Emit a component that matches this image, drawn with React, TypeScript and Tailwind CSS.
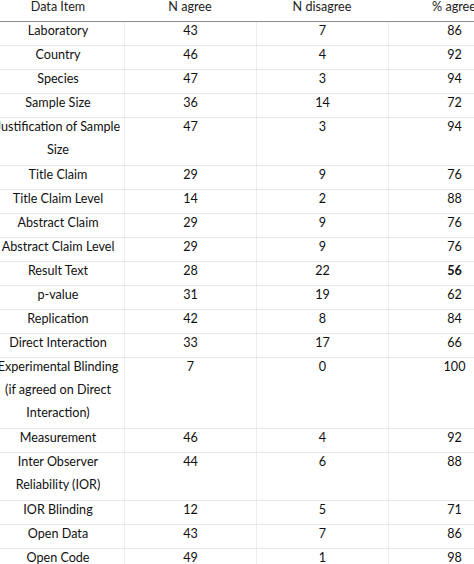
const rows: { item: string[]; agree: string; disagree: string; pct: string; bold?: boolean }[] = [
  { item: ["Laboratory"], agree: "43", disagree: "7", pct: "86" },
  { item: ["Country"], agree: "46", disagree: "4", pct: "92" },
  { item: ["Species"], agree: "47", disagree: "3", pct: "94" },
  { item: ["Sample Size"], agree: "36", disagree: "14", pct: "72" },
  { item: ["Justification of Sample", "Size"], agree: "47", disagree: "3", pct: "94" },
  { item: ["Title Claim"], agree: "29", disagree: "9", pct: "76" },
  { item: ["Title Claim Level"], agree: "14", disagree: "2", pct: "88" },
  { item: ["Abstract Claim"], agree: "29", disagree: "9", pct: "76" },
  { item: ["Abstract Claim Level"], agree: "29", disagree: "9", pct: "76" },
  { item: ["Result Text"], agree: "28", disagree: "22", pct: "56", bold: true },
  { item: ["p-value"], agree: "31", disagree: "19", pct: "62" },
  { item: ["Replication"], agree: "42", disagree: "8", pct: "84" },
  { item: ["Direct Interaction"], agree: "33", disagree: "17", pct: "66" },
  {
    item: ["Experimental Blinding", "(if agreed on Direct", "Interaction)"],
    agree: "7",
    disagree: "0",
    pct: "100",
  },
  { item: ["Measurement"], agree: "46", disagree: "4", pct: "92" },
  { item: ["Inter Observer", "Reliability (IOR)"], agree: "44", disagree: "6", pct: "88" },
  { item: ["IOR Blinding"], agree: "12", disagree: "5", pct: "71" },
  { item: ["Open Data"], agree: "43", disagree: "7", pct: "86" },
  { item: ["Open Code"], agree: "49", disagree: "1", pct: "98" },
];

const heights: Record<number, string> = {
  1: "h-[24px]",
  2: "h-[48px]",
  3: "h-[71px]",
};

export default function App() {
  return (
    <div className="w-[474px] h-[564px] overflow-hidden bg-white text-[12.6px] text-[#111] font-['Lato',sans-serif]">
      <div className="w-[528px] ml-[-8px] mt-[-3px]">
        {/* header */}
        <div className="grid grid-cols-[132px_132px_132px_132px] h-[25px] border-b border-[#8c8c8c] text-center leading-[23px] text-[#222]">
          <div className="-translate-y-[2px]">Data Item</div>
          <div className="-translate-y-[2px]">N agree</div>
          <div className="-translate-y-[2px]">N disagree</div>
          <div className="-translate-y-[2px]">% agree</div>
        </div>

        {rows.map((r, i) => (
          <div
            key={i}
            className={`grid grid-cols-[132px_132px_132px_132px] border-b border-[#e6e6e6] text-center leading-[23px] ${
              heights[r.item.length]
            }`}
          >
            <div className="-translate-y-[3px]">
              {r.item.map((line, j) => (
                <div key={j}>{line}</div>
              ))}
            </div>
            <div className="border-l border-[#ececec]">
              <div className="-translate-y-[3px]">{r.agree}</div>
            </div>
            <div className="border-l border-[#ececec]">
              <div className="-translate-y-[3px]">{r.disagree}</div>
            </div>
            <div className="border-l border-[#ececec]">
              <div className={`-translate-y-[3px] ${r.bold ? "font-bold" : ""}`}>{r.pct}</div>
            </div>
          </div>
        ))}
      </div>
    </div>
  );
}
